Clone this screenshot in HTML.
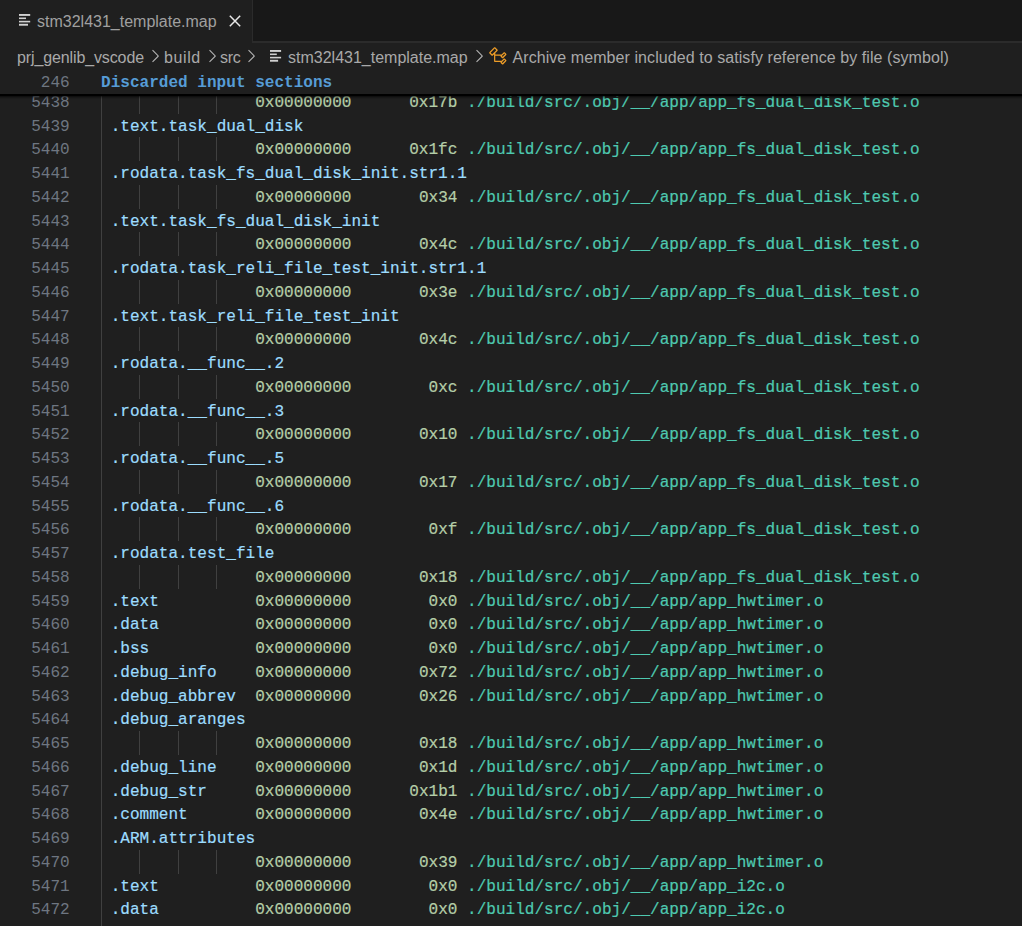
<!DOCTYPE html>
<html><head><meta charset="utf-8">
<style>
html,body{margin:0;padding:0;}
body{width:1022px;height:926px;overflow:hidden;background:#1f1f1f;position:relative;font-family:"Liberation Sans",sans-serif;}
.tabbar{position:absolute;left:0;top:0;width:1022px;height:41px;background:#181818;border-bottom:2px solid #2b2b2b;}
.tab{position:absolute;left:0;top:0;width:252px;height:43px;background:#1f1f1f;border-right:1px solid #2b2b2b;}
.tabtxt{position:absolute;left:37px;top:11.9px;font-size:16px;color:#a0a0a0;white-space:nowrap;line-height:20px;}
.close{position:absolute;left:229px;top:15px;width:12px;height:12px;}
.crumbs{position:absolute;left:0;top:43px;height:26px;width:1022px;font-size:16px;color:#a9a9a9;white-space:nowrap;}
.crumbs span{position:absolute;top:4.7px;line-height:20px;}
.chev{position:absolute;}
.editor{position:absolute;left:0;top:69.95px;width:1022px;height:857px;overflow:hidden;}
.ln{position:absolute;left:0;width:1022px;height:23.75px;line-height:23.75px;font-family:"Liberation Mono",monospace;font-size:16.055px;white-space:pre;}
.ln .num{position:absolute;right:952.3px;top:2.0px;color:#6e7681;}
.ln .code{position:absolute;left:101.07px;top:2.0px;}
.v{color:#9cdcfe}.n{color:#b5cea8}.p{color:#4ec9b0}
.ln .code{-webkit-text-stroke:0.2px currentColor;}
.g{position:absolute;width:1.25px;height:23.75px;background:#404040;}
.g0{position:absolute;left:100.9px;top:0;width:1.3px;height:926px;background:#404040;}
.sticky{position:absolute;left:0;top:0;width:1022px;height:23.75px;background:#1f1f1f;}
.shadow{position:absolute;left:0;top:23.75px;width:1022px;height:6px;background:linear-gradient(to bottom,#000 0px,#000 1.9px,rgba(0,0,0,0.45) 2.6px,rgba(0,0,0,0.15) 4px,rgba(0,0,0,0) 5.5px);}
</style></head><body>
<div class="tabbar"></div>
<div class="tab">
  <svg style="position:absolute;left:19px;top:14px" width="12" height="12" viewBox="0 0 12 12">
    <rect x="0" y="0" width="11.2" height="1.9" fill="#d0d0d0"/>
    <rect x="0" y="3.5" width="7" height="1.6" fill="#d0d0d0"/>
    <rect x="0" y="6.8" width="11.2" height="1.6" fill="#d0d0d0"/>
    <rect x="0" y="9.8" width="9" height="1.9" fill="#d0d0d0"/>
  </svg>
  <div class="tabtxt">stm32l431_template.map</div>
  <svg class="close" viewBox="0 0 12 12"><path d="M0.8 0.8L11.2 11.2M11.2 0.8L0.8 11.2" stroke="#e8e8e8" stroke-width="1.5"/></svg>
</div>
<div class="crumbs">
  <span style="left:17px;letter-spacing:-0.12px">prj_genlib_vscode</span>
  <svg class="chev" style="left:144.8px;top:3px" width="20" height="20" viewBox="0 0 16 16"><path fill="#b4b4b4" d="M10.072 8.024L5.715 3.667l.618-.62L11 7.716v.618L6.333 13l-.618-.619 4.357-4.357z"/></svg>
  <span style="left:164px;letter-spacing:0.6px">build</span>
  <svg class="chev" style="left:201.8px;top:3px" width="20" height="20" viewBox="0 0 16 16"><path fill="#b4b4b4" d="M10.072 8.024L5.715 3.667l.618-.62L11 7.716v.618L6.333 13l-.618-.619 4.357-4.357z"/></svg>
  <span style="left:220px;letter-spacing:-0.3px">src</span>
  <svg class="chev" style="left:240.8px;top:3px" width="20" height="20" viewBox="0 0 16 16"><path fill="#b4b4b4" d="M10.072 8.024L5.715 3.667l.618-.62L11 7.716v.618L6.333 13l-.618-.619 4.357-4.357z"/></svg>
  <svg style="position:absolute;left:270px;top:7px" width="12" height="12" viewBox="0 0 12 12">
    <rect x="0" y="0" width="11.1" height="1.9" fill="#d0d0d0"/>
    <rect x="0" y="3.5" width="6.8" height="1.6" fill="#d0d0d0"/>
    <rect x="0" y="6.8" width="11.1" height="1.6" fill="#d0d0d0"/>
    <rect x="0" y="9.8" width="8.1" height="1.9" fill="#d0d0d0"/>
  </svg>
  <span style="left:288px">stm32l431_template.map</span>
  <svg class="chev" style="left:468.6px;top:3px" width="20" height="20" viewBox="0 0 16 16"><path fill="#b4b4b4" d="M10.072 8.024L5.715 3.667l.618-.62L11 7.716v.618L6.333 13l-.618-.619 4.357-4.357z"/></svg>
  <svg style="position:absolute;left:488px;top:2.75px" width="20" height="20" viewBox="0 0 16 16"><path fill="#ee9d28" d="M11.34 9.71h.71l2.67-2.67v-.71L13.38 5h-.7l-1.82 1.81h-5V5.56l1.86-1.85V3l-2-2H5L1 5v.71l2 2h.71l1.14-1.150v5.79l.5.5H10v.52l1.33 1.34h.71l2.67-2.67v-.71L13.37 10h-.7l-1.860 1.85h-5v-4H10v.48l1.34 1.38zm1.69-3.65l.63.63-2 2-.63-.63 2-2zm0 5l.63.63-2 2-.63-.63 2-2zM3.35 6.65L2.06 5.36l3.3-3.3 1.29 1.29-3.3 3.3z"/></svg>
  <span style="left:512.5px;letter-spacing:0.07px">Archive member included to satisfy reference by file (symbol)</span>
</div>
<div class="editor">
<div class="g0"></div>
<div style="position:absolute;left:0;top:-69.95px;width:1022px;height:926px;">
<div class="ln" style="top:89.75px"><span class="num">5438</span><span class="code">                <span class="n">0x00000000</span>      <span class="n">0x17b</span> <span class="p">./build/src/.obj/__/app/app_fs_dual_disk_test.o</span></span></div>
<div class="g" style="top:89.75px;left:138.9px"></div>
<div class="g" style="top:89.75px;left:177.7px"></div>
<div class="g" style="top:89.75px;left:215.9px"></div>
<div class="ln" style="top:113.50px"><span class="num">5439</span><span class="code"> <span class="v">.text.task_dual_disk</span></span></div>
<div class="ln" style="top:137.25px"><span class="num">5440</span><span class="code">                <span class="n">0x00000000</span>      <span class="n">0x1fc</span> <span class="p">./build/src/.obj/__/app/app_fs_dual_disk_test.o</span></span></div>
<div class="g" style="top:137.25px;left:138.9px"></div>
<div class="g" style="top:137.25px;left:177.7px"></div>
<div class="g" style="top:137.25px;left:215.9px"></div>
<div class="ln" style="top:161.00px"><span class="num">5441</span><span class="code"> <span class="v">.rodata.task_fs_dual_disk_init.str1.1</span></span></div>
<div class="ln" style="top:184.75px"><span class="num">5442</span><span class="code">                <span class="n">0x00000000</span>       <span class="n">0x34</span> <span class="p">./build/src/.obj/__/app/app_fs_dual_disk_test.o</span></span></div>
<div class="g" style="top:184.75px;left:138.9px"></div>
<div class="g" style="top:184.75px;left:177.7px"></div>
<div class="g" style="top:184.75px;left:215.9px"></div>
<div class="ln" style="top:208.50px"><span class="num">5443</span><span class="code"> <span class="v">.text.task_fs_dual_disk_init</span></span></div>
<div class="ln" style="top:232.25px"><span class="num">5444</span><span class="code">                <span class="n">0x00000000</span>       <span class="n">0x4c</span> <span class="p">./build/src/.obj/__/app/app_fs_dual_disk_test.o</span></span></div>
<div class="g" style="top:232.25px;left:138.9px"></div>
<div class="g" style="top:232.25px;left:177.7px"></div>
<div class="g" style="top:232.25px;left:215.9px"></div>
<div class="ln" style="top:256.00px"><span class="num">5445</span><span class="code"> <span class="v">.rodata.task_reli_file_test_init.str1.1</span></span></div>
<div class="ln" style="top:279.75px"><span class="num">5446</span><span class="code">                <span class="n">0x00000000</span>       <span class="n">0x3e</span> <span class="p">./build/src/.obj/__/app/app_fs_dual_disk_test.o</span></span></div>
<div class="g" style="top:279.75px;left:138.9px"></div>
<div class="g" style="top:279.75px;left:177.7px"></div>
<div class="g" style="top:279.75px;left:215.9px"></div>
<div class="ln" style="top:303.50px"><span class="num">5447</span><span class="code"> <span class="v">.text.task_reli_file_test_init</span></span></div>
<div class="ln" style="top:327.25px"><span class="num">5448</span><span class="code">                <span class="n">0x00000000</span>       <span class="n">0x4c</span> <span class="p">./build/src/.obj/__/app/app_fs_dual_disk_test.o</span></span></div>
<div class="g" style="top:327.25px;left:138.9px"></div>
<div class="g" style="top:327.25px;left:177.7px"></div>
<div class="g" style="top:327.25px;left:215.9px"></div>
<div class="ln" style="top:351.00px"><span class="num">5449</span><span class="code"> <span class="v">.rodata.__func__.2</span></span></div>
<div class="ln" style="top:374.75px"><span class="num">5450</span><span class="code">                <span class="n">0x00000000</span>        <span class="n">0xc</span> <span class="p">./build/src/.obj/__/app/app_fs_dual_disk_test.o</span></span></div>
<div class="g" style="top:374.75px;left:138.9px"></div>
<div class="g" style="top:374.75px;left:177.7px"></div>
<div class="g" style="top:374.75px;left:215.9px"></div>
<div class="ln" style="top:398.50px"><span class="num">5451</span><span class="code"> <span class="v">.rodata.__func__.3</span></span></div>
<div class="ln" style="top:422.25px"><span class="num">5452</span><span class="code">                <span class="n">0x00000000</span>       <span class="n">0x10</span> <span class="p">./build/src/.obj/__/app/app_fs_dual_disk_test.o</span></span></div>
<div class="g" style="top:422.25px;left:138.9px"></div>
<div class="g" style="top:422.25px;left:177.7px"></div>
<div class="g" style="top:422.25px;left:215.9px"></div>
<div class="ln" style="top:446.00px"><span class="num">5453</span><span class="code"> <span class="v">.rodata.__func__.5</span></span></div>
<div class="ln" style="top:469.75px"><span class="num">5454</span><span class="code">                <span class="n">0x00000000</span>       <span class="n">0x17</span> <span class="p">./build/src/.obj/__/app/app_fs_dual_disk_test.o</span></span></div>
<div class="g" style="top:469.75px;left:138.9px"></div>
<div class="g" style="top:469.75px;left:177.7px"></div>
<div class="g" style="top:469.75px;left:215.9px"></div>
<div class="ln" style="top:493.50px"><span class="num">5455</span><span class="code"> <span class="v">.rodata.__func__.6</span></span></div>
<div class="ln" style="top:517.25px"><span class="num">5456</span><span class="code">                <span class="n">0x00000000</span>        <span class="n">0xf</span> <span class="p">./build/src/.obj/__/app/app_fs_dual_disk_test.o</span></span></div>
<div class="g" style="top:517.25px;left:138.9px"></div>
<div class="g" style="top:517.25px;left:177.7px"></div>
<div class="g" style="top:517.25px;left:215.9px"></div>
<div class="ln" style="top:541.00px"><span class="num">5457</span><span class="code"> <span class="v">.rodata.test_file</span></span></div>
<div class="ln" style="top:564.75px"><span class="num">5458</span><span class="code">                <span class="n">0x00000000</span>       <span class="n">0x18</span> <span class="p">./build/src/.obj/__/app/app_fs_dual_disk_test.o</span></span></div>
<div class="g" style="top:564.75px;left:138.9px"></div>
<div class="g" style="top:564.75px;left:177.7px"></div>
<div class="g" style="top:564.75px;left:215.9px"></div>
<div class="ln" style="top:588.50px"><span class="num">5459</span><span class="code"> <span class="v">.text</span>          <span class="n">0x00000000</span>        <span class="n">0x0</span> <span class="p">./build/src/.obj/__/app/app_hwtimer.o</span></span></div>
<div class="ln" style="top:612.25px"><span class="num">5460</span><span class="code"> <span class="v">.data</span>          <span class="n">0x00000000</span>        <span class="n">0x0</span> <span class="p">./build/src/.obj/__/app/app_hwtimer.o</span></span></div>
<div class="ln" style="top:636.00px"><span class="num">5461</span><span class="code"> <span class="v">.bss</span>           <span class="n">0x00000000</span>        <span class="n">0x0</span> <span class="p">./build/src/.obj/__/app/app_hwtimer.o</span></span></div>
<div class="ln" style="top:659.75px"><span class="num">5462</span><span class="code"> <span class="v">.debug_info</span>    <span class="n">0x00000000</span>       <span class="n">0x72</span> <span class="p">./build/src/.obj/__/app/app_hwtimer.o</span></span></div>
<div class="ln" style="top:683.50px"><span class="num">5463</span><span class="code"> <span class="v">.debug_abbrev</span>  <span class="n">0x00000000</span>       <span class="n">0x26</span> <span class="p">./build/src/.obj/__/app/app_hwtimer.o</span></span></div>
<div class="ln" style="top:707.25px"><span class="num">5464</span><span class="code"> <span class="v">.debug_aranges</span></span></div>
<div class="ln" style="top:731.00px"><span class="num">5465</span><span class="code">                <span class="n">0x00000000</span>       <span class="n">0x18</span> <span class="p">./build/src/.obj/__/app/app_hwtimer.o</span></span></div>
<div class="g" style="top:731.00px;left:138.9px"></div>
<div class="g" style="top:731.00px;left:177.7px"></div>
<div class="g" style="top:731.00px;left:215.9px"></div>
<div class="ln" style="top:754.75px"><span class="num">5466</span><span class="code"> <span class="v">.debug_line</span>    <span class="n">0x00000000</span>       <span class="n">0x1d</span> <span class="p">./build/src/.obj/__/app/app_hwtimer.o</span></span></div>
<div class="ln" style="top:778.50px"><span class="num">5467</span><span class="code"> <span class="v">.debug_str</span>     <span class="n">0x00000000</span>      <span class="n">0x1b1</span> <span class="p">./build/src/.obj/__/app/app_hwtimer.o</span></span></div>
<div class="ln" style="top:802.25px"><span class="num">5468</span><span class="code"> <span class="v">.comment</span>       <span class="n">0x00000000</span>       <span class="n">0x4e</span> <span class="p">./build/src/.obj/__/app/app_hwtimer.o</span></span></div>
<div class="ln" style="top:826.00px"><span class="num">5469</span><span class="code"> <span class="v">.ARM.attributes</span></span></div>
<div class="ln" style="top:849.75px"><span class="num">5470</span><span class="code">                <span class="n">0x00000000</span>       <span class="n">0x39</span> <span class="p">./build/src/.obj/__/app/app_hwtimer.o</span></span></div>
<div class="g" style="top:849.75px;left:138.9px"></div>
<div class="g" style="top:849.75px;left:177.7px"></div>
<div class="g" style="top:849.75px;left:215.9px"></div>
<div class="ln" style="top:873.50px"><span class="num">5471</span><span class="code"> <span class="v">.text</span>          <span class="n">0x00000000</span>        <span class="n">0x0</span> <span class="p">./build/src/.obj/__/app/app_i2c.o</span></span></div>
<div class="ln" style="top:897.25px"><span class="num">5472</span><span class="code"> <span class="v">.data</span>          <span class="n">0x00000000</span>        <span class="n">0x0</span> <span class="p">./build/src/.obj/__/app/app_i2c.o</span></span></div>
<div class="ln" style="top:921.00px"><span class="num">5473</span><span class="code"> <span class="v">.bss</span>           <span class="n">0x00000000</span>        <span class="n">0x0</span> <span class="p">./build/src/.obj/__/app/app_i2c.o</span></span></div>
</div>
<div class="sticky"><div class="ln" style="top:-0.1px"><span class="num">246</span><span class="code" style="color:#569cd6;font-weight:bold;-webkit-text-stroke:0">Discarded input sections</span></div></div>
<div class="shadow"></div>
</div>
</body></html>
